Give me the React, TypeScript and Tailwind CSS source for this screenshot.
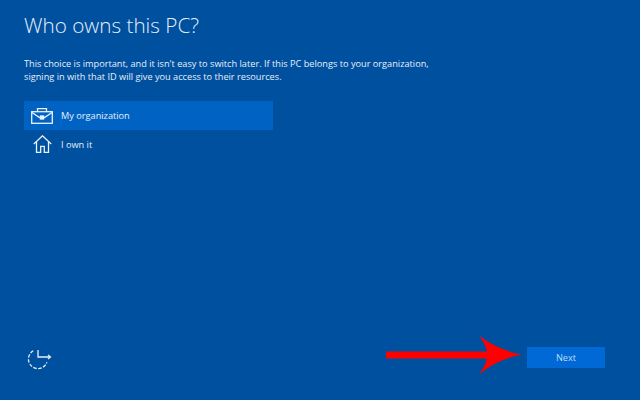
export default function App() {
  return (
    <div className="w-[640px] h-[400px] bg-[#0050a0] text-white flex flex-col overflow-hidden relative font-['Open_Sans',sans-serif]">
      {/* HEADER */}
      <div className="pl-6 pt-[9px] flex-1">
        <h1 className="text-[20.7px] leading-[32px] font-light text-[#e6eff8]">Who owns this PC?</h1>
        <p className="mt-[16px] text-[9.2px] leading-[13px] text-[#e6eff8] w-[420px]">
          This choice is important, and it isn't easy to switch later. If this PC belongs to your organization, signing in with that ID will give you access to their resources.
        </p>

        {/* OPTIONS */}
        <div className="mt-[18px] w-[249px] flex flex-col">
          <div className="h-[29px] bg-[#0063c4] flex items-center pl-[7px] gap-[8px]">
            <svg width="22" height="16" viewBox="0 0 22 16" fill="none" stroke="#eaf2fa" strokeWidth="1.3">
              <rect x="0.7" y="3.7" width="20.6" height="11.6" />
              <path d="M6.500 3.500V0.700h9v2.800" />
              <path d="M1 4.500l7.500 5h5l7.500-5" />
              <rect x="9.500" y="8" width="3" height="3" fill="#eaf2fa" />
            </svg>
            <span className="text-[9.2px] text-[#e6eff8]">My organization</span>
          </div>
          <div className="h-[29px] flex items-center pl-[9px] gap-[9px]">
            <svg width="19" height="18" viewBox="0 0 19 18" fill="none" stroke="#eaf2fa" strokeWidth="1.3" className="mt-[-1px]">
              <path d="M0.800 9L9.500 0.800 18.200 9" />
              <path d="M3.500 7V17.300h4.200v-6h3.600v6h4.200V7" />
            </svg>
            <span className="text-[9.2px] text-[#e6eff8]">I own it</span>
          </div>
        </div>
      </div>

      {/* FOOTER */}
      <div className="h-[53px] flex justify-between pl-[27px] pr-[35px] items-start">
        <svg width="25" height="22" viewBox="0 0 25 22" fill="none" stroke="#e6eff8" strokeWidth="1.3" className="mt-[2px]">
          <path d="M11 1v7h12" />
          <path d="M6.250 1.800a9.500 9.500 0 1 0 13.650 11.400" strokeDasharray="3.500 1.500" />
          <path d="M21 6l2.500 2-2.500 2" />
        </svg>
        <button className="w-[78px] h-[21px] bg-[#0069d6] text-[9.2px] text-[#bcdcf8]">Next</button>
      </div>

      {/* red arrow drawn over the screenshot */}
      <svg className="absolute left-[385px] top-[334px]" width="138" height="42" viewBox="0 0 138 42" fill="#fe0000">
        <path d="M1 17.500h101C101 12 97 6 94 1c10 9 28 17 43 19.500C122 23 104 31 94 41c3-5 7-11 8-16.500H1z" />
      </svg>
    </div>
  );
}
